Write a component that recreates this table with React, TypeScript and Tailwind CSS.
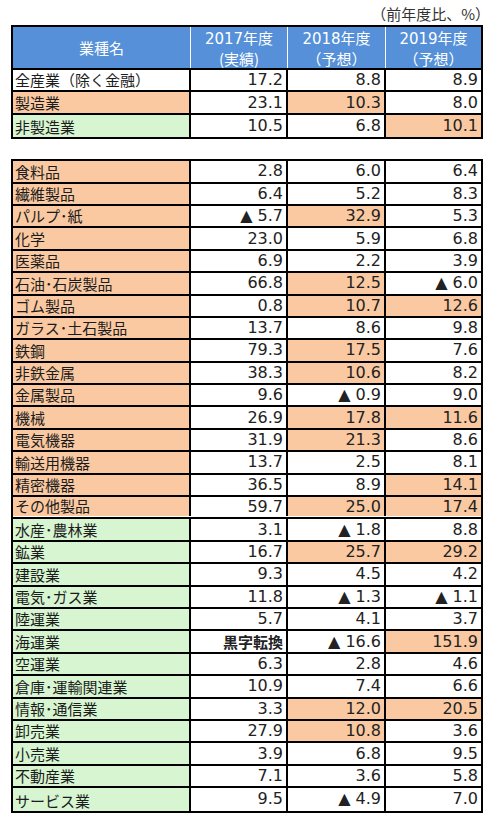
const COLS = "grid grid-cols-[178px_97px_98px_95px]";

type Cell = { v: string; hl?: boolean; bold?: boolean };
type Row = { name: string; tone: "w" | "o" | "g"; cells: Cell[] };

const c = (v: string, hl = false): Cell => ({ v, hl });

const topRows: Row[] = [
  { name: "全産業（除く金融）", tone: "w", cells: [c("17.2"), c("8.8"), c("8.9")] },
  { name: "製造業", tone: "o", cells: [c("23.1"), c("10.3", true), c("8.0")] },
  { name: "非製造業", tone: "g", cells: [c("10.5"), c("6.8"), c("10.1", true)] },
];

const rows: Row[] = [
  { name: "食料品", tone: "o", cells: [c("2.8"), c("6.0"), c("6.4")] },
  { name: "繊維製品", tone: "o", cells: [c("6.4"), c("5.2"), c("8.3")] },
  { name: "パルプ･紙", tone: "o", cells: [c("▲ 5.7"), c("32.9", true), c("5.3")] },
  { name: "化学", tone: "o", cells: [c("23.0"), c("5.9"), c("6.8")] },
  { name: "医薬品", tone: "o", cells: [c("6.9"), c("2.2"), c("3.9")] },
  { name: "石油･石炭製品", tone: "o", cells: [c("66.8"), c("12.5", true), c("▲ 6.0")] },
  { name: "ゴム製品", tone: "o", cells: [c("0.8"), c("10.7", true), c("12.6", true)] },
  { name: "ガラス･土石製品", tone: "o", cells: [c("13.7"), c("8.6"), c("9.8")] },
  { name: "鉄鋼", tone: "o", cells: [c("79.3"), c("17.5", true), c("7.6")] },
  { name: "非鉄金属", tone: "o", cells: [c("38.3"), c("10.6", true), c("8.2")] },
  { name: "金属製品", tone: "o", cells: [c("9.6"), c("▲ 0.9"), c("9.0")] },
  { name: "機械", tone: "o", cells: [c("26.9"), c("17.8", true), c("11.6", true)] },
  { name: "電気機器", tone: "o", cells: [c("31.9"), c("21.3", true), c("8.6")] },
  { name: "輸送用機器", tone: "o", cells: [c("13.7"), c("2.5"), c("8.1")] },
  { name: "精密機器", tone: "o", cells: [c("36.5"), c("8.9"), c("14.1", true)] },
  { name: "その他製品", tone: "o", cells: [c("59.7"), c("25.0", true), c("17.4", true)] },
  { name: "水産･農林業", tone: "g", cells: [c("3.1"), c("▲ 1.8"), c("8.8")] },
  { name: "鉱業", tone: "g", cells: [c("16.7"), c("25.7", true), c("29.2", true)] },
  { name: "建設業", tone: "g", cells: [c("9.3"), c("4.5"), c("4.2")] },
  { name: "電気･ガス業", tone: "g", cells: [c("11.8"), c("▲ 1.3"), c("▲ 1.1")] },
  { name: "陸運業", tone: "g", cells: [c("5.7"), c("4.1"), c("3.7")] },
  { name: "海運業", tone: "g", cells: [{ v: "黒字転換", bold: true }, c("▲ 16.6"), c("151.9", true)] },
  { name: "空運業", tone: "g", cells: [c("6.3"), c("2.8"), c("4.6")] },
  { name: "倉庫･運輸関連業", tone: "g", cells: [c("10.9"), c("7.4"), c("6.6")] },
  { name: "情報･通信業", tone: "g", cells: [c("3.3"), c("12.0", true), c("20.5", true)] },
  { name: "卸売業", tone: "g", cells: [c("27.9"), c("10.8", true), c("3.6")] },
  { name: "小売業", tone: "g", cells: [c("3.9"), c("6.8"), c("9.5")] },
  { name: "不動産業", tone: "g", cells: [c("7.1"), c("3.6"), c("5.8")] },
  { name: "サービス業", tone: "g", cells: [c("9.5"), c("▲ 4.9"), c("7.0")] },
];

const toneBg = { w: "bg-white", o: "bg-[#fac9a1]", g: "bg-[#d6f5d0]" };

function DataRow({ row, last, double }: { row: Row; last?: boolean; double?: boolean }) {
  const border = last ? "" : double ? "border-b-[5px] border-double border-black" : "border-b-2 border-black";
  return (
    <div className={`${COLS} ${border} h-[22.4px] box-border`}>
      <div className={`${toneBg[row.tone]} border-r-2 border-black pl-[2px] flex items-end pb-[1px] text-[15px] leading-[18px] text-[#1c1c1c]`}>
        {row.name}
      </div>
      {row.cells.map((cell, i) => (
        <div
          key={i}
          className={`${cell.hl ? "bg-[#fac9a1]" : "bg-white"} ${i < 2 ? "border-r-2 border-black" : ""} flex items-center justify-end pr-[3px] text-[16px] leading-[18px] text-[#222]`}
        >
          {cell.bold ? (
            <span className="font-bold text-[15px]" style={{ fontFamily: '"Noto Sans CJK JP", sans-serif' }}>
              {cell.v}
            </span>
          ) : (
            <span className="font-['DejaVu_Sans','Noto_Sans_CJK_JP',sans-serif]">{cell.v}</span>
          )}
        </div>
      ))}
    </div>
  );
}

export default function App() {
  return (
    <div className="w-[500px] h-[822px] bg-white font-['Noto_Sans_CJK_JP',sans-serif]">
      <div className="h-[25px] pt-[4px] pr-[10px] text-right text-[15px] leading-[20px] text-[#333]">
        （前年度比、%）
      </div>

      <div className="ml-[11px] w-[472px] border-2 border-black">
        <div className={`${COLS} h-[43px] border-b-2 border-black bg-[#5590d8] text-white text-[15px] leading-[19px]`}>
          <div className="border-r border-white flex items-center justify-center">業種名</div>
          <div className="border-r border-white flex flex-col items-center justify-center">
            <span><span className="font-['DejaVu_Sans',sans-serif]">2017</span>年度</span>
            <span>(実績)</span>
          </div>
          <div className="border-r border-white flex flex-col items-center justify-center">
            <span><span className="font-['DejaVu_Sans',sans-serif]">2018</span>年度</span>
            <span>（予想）</span>
          </div>
          <div className="flex flex-col items-center justify-center">
            <span><span className="font-['DejaVu_Sans',sans-serif]">2019</span>年度</span>
            <span>（予想）</span>
          </div>
        </div>
        {topRows.map((r, i) => (
          <DataRow key={r.name} row={r} last={i === topRows.length - 1} />
        ))}
      </div>

      <div className="mt-[20px] ml-[11px] w-[472px] border-2 border-black">
        {rows.map((r, i) => (
          <DataRow key={r.name} row={r} last={i === rows.length - 1} double={r.name === "その他製品"} />
        ))}
      </div>
    </div>
  );
}
